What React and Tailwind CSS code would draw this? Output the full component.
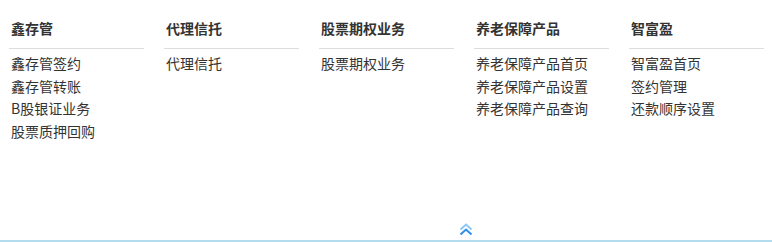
export default function App() {
  const cols = [
    { title: "鑫存管", items: ["鑫存管签约", "鑫存管转账", "B股银证业务", "股票质押回购"] },
    { title: "代理信托", items: ["代理信托"] },
    { title: "股票期权业务", items: ["股票期权业务"] },
    { title: "养老保障产品", items: ["养老保障产品首页", "养老保障产品设置", "养老保障产品查询"] },
    { title: "智富盈", items: ["智富盈首页", "签约管理", "还款顺序设置"] },
  ];
  return (
    <div
      className="w-[772px] h-[242px] bg-white flex flex-col text-[#333]"
      style={{ fontFamily: '"Microsoft YaHei", "Noto Sans CJK SC", sans-serif' }}
    >
      <div className="flex gap-[20px] pl-[9px] pt-[15px] flex-1">
        {cols.map((c) => (
          <div key={c.title} className="w-[135px]">
            <div className="h-[34px] border-b border-[#dddddd] pl-[2px] text-[14px] font-bold leading-[26px]">
              {c.title}
            </div>
            <div className="pl-[2px] pt-[3px] text-[14px] leading-[22.7px]">
              {c.items.map((i) => (
                <div key={i}>{i}</div>
              ))}
            </div>
          </div>
        ))}
      </div>
      <div className="flex pb-[4px] pl-[459px]">
        <svg width="14" height="13" viewBox="0 0 14 13">
          <polyline points="1.5,6.5 7,1.5 12.5,6.5" fill="none" stroke="#8cc8f7" strokeWidth="2" />
          <polyline points="1.5,11.5 7,6.5 12.5,11.5" fill="none" stroke="#2a8ff0" strokeWidth="2" />
        </svg>
      </div>
      <div className="h-[2px] bg-[#b3dcef]" />
    </div>
  );
}
